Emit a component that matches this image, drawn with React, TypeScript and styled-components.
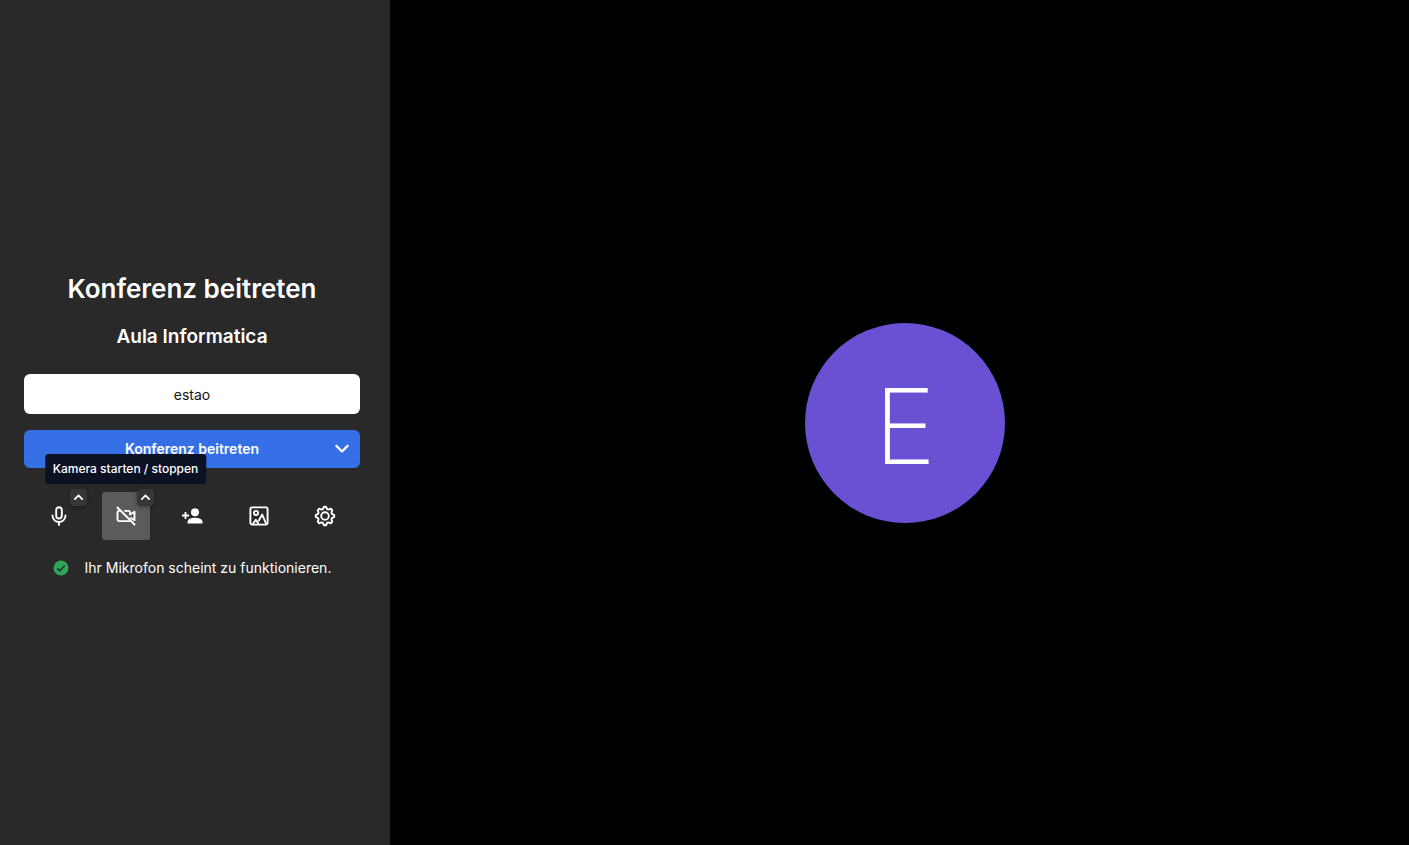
import React from "react";
import styled, { createGlobalStyle } from "styled-components";

const GlobalStyle = createGlobalStyle`
  *, *::before, *::after { box-sizing: border-box; }
  body {
    margin: 0;
    background: #000;
    color: #fff;
    font-family: Inter, "Liberation Sans", sans-serif;
    font-size: 14px;
    line-height: 20px;
  }
  button, input { font: inherit; color: inherit; }
`;

const Page = styled.main`
  display: flex;
  min-height: 100vh;
`;

const Panel = styled.section`
  display: flex;
  flex: 0 0 390px;
  flex-direction: column;
  justify-content: center;
  padding: 6px 30px 0 24px;
  background: #292929;
`;

const Title = styled.h1`
  margin: 0 0 16px;
  font-size: 26px;
  font-weight: 600;
  line-height: 36px;
  text-align: center;
`;

const RoomName = styled.h2`
  margin: 0 0 23px;
  font-size: 19px;
  font-weight: 600;
  line-height: 28px;
  text-align: center;
`;

const Form = styled.form`
  display: flex;
  flex-direction: column;
  gap: 16px;
`;

const NameInput = styled.input`
  width: 100%;
  height: 40px;
  padding: 0 16px;
  border: 0;
  border-radius: 6px;
  background: #fff;
  color: #141414;
  text-align: center;
  outline: none;
`;

const JoinGroup = styled.div`
  display: grid;
  grid-template-columns: 36px 1fr 36px;
  height: 38px;
  border-radius: 6px;
  background: #356fe6;
`;

const JoinButton = styled.button`
  grid-column: 2;
  padding: 0;
  border: 0;
  background: none;
  font-weight: 600;
`;

const JoinOptions = styled.button`
  display: flex;
  align-items: center;
  justify-content: center;
  padding: 0;
  border: 0;
  background: none;
`;

const Toolbar = styled.div`
  display: flex;
  justify-content: space-between;
  margin: 24px 0 16px;
  padding: 0 11px;
`;

const ToolSlot = styled.div`
  position: relative;
  width: 48px;
  height: 48px;
`;

const ToolButton = styled.button<{ $active?: boolean }>`
  display: flex;
  align-items: center;
  justify-content: center;
  width: 100%;
  height: 100%;
  padding: 0;
  border: 0;
  border-radius: 3px;
  background: ${({ $active }) => ($active ? "#5b5b5b" : "transparent")};
`;

const OptionsButton = styled.button`
  position: absolute;
  top: -3px;
  right: -4px;
  display: flex;
  align-items: center;
  justify-content: center;
  width: 17px;
  height: 17px;
  padding: 0;
  border: 0;
  border-radius: 4px;
  background: #363636;
  box-shadow: 0 1px 4px rgba(0, 0, 0, 0.35);
`;

const Tooltip = styled.div`
  position: absolute;
  bottom: calc(100% + 8px);
  left: 50%;
  z-index: 1;
  padding: 5px 8px;
  border-radius: 3px;
  background: #0d1124;
  font-size: 12px;
  font-weight: 500;
  line-height: 20px;
  white-space: nowrap;
  transform: translateX(-50%);
`;

const Status = styled.p`
  display: flex;
  align-items: center;
  justify-content: center;
  gap: 16px;
  margin: 0;
  line-height: 24px;
`;

const Preview = styled.section`
  display: flex;
  flex: 1;
  align-items: center;
  justify-content: center;
  padding-left: 11px;
  background: #000;
`;

const Avatar = styled.div`
  display: flex;
  align-items: center;
  justify-content: center;
  width: 200px;
  height: 200px;
  padding-top: 6px;
  border-radius: 50%;
  background: #6a50d3;
  font-size: 105px;
  font-weight: 150;
  line-height: 120px;
`;

const Chevron = ({ size, up }: { size: number; up?: boolean }) => (
  <svg width={size} height={size} viewBox="0 0 16 16" fill="none" stroke="currentColor" strokeWidth={up ? 2.2 : 1.8} strokeLinecap="round" strokeLinejoin="round" aria-hidden="true">
    <path d={up ? "M3.500 10l4.500-4.500 4.500 4.500" : "M3.500 5.500l4.500 4.500 4.500-4.500"} />
  </svg>
);

const Icon = ({ children }: { children: React.ReactNode }) => (
  <svg width="24" height="24" viewBox="0 0 24 24" fill="none" stroke="currentColor" strokeWidth="1.9" strokeLinecap="round" strokeLinejoin="round" aria-hidden="true">
    {children}
  </svg>
);

const MicIcon = () => (
  <Icon>
    <rect x="9.2" y="3.2" width="5.6" height="11.3" rx="2.8" />
    <path d="M5.500 11.500a6.500 6.500 0 0 0 13 0M12 18v3" />
  </Icon>
);

const CameraOffIcon = () => (
  <Icon>
    <path d="M6.500 6.900H5a1.500 1.500 0 0 0-1.500 1.500v7.200A1.500 1.500 0 0 0 5 17.100h10.500M11 6.900h3.500A1.500 1.500 0 0 1 16 8.400v2.100l4.500-2.800v8.600L17 14" />
    <path d="M3.500 3.500l17 17" />
  </Icon>
);

const InviteIcon = () => (
  <Icon>
    <path d="M5.500 8v7M2 11.500h7" strokeLinecap="butt" strokeWidth="1.800" />
    <circle cx="15" cy="8.300" r="4" fill="currentColor" stroke="none" />
    <path d="M7.500 19.500v-1.500c0-3 4-4.200 7.500-4.200s7.500 1.200 7.500 4.200v1.500z" fill="currentColor" stroke="none" />
  </Icon>
);

const BackgroundIcon = () => (
  <Icon>
    <rect x="3.400" y="3.400" width="17.200" height="17.200" rx="1.500" />
    <circle cx="9" cy="9" r="2.100" />
    <path d="M6.300 19.500l2.500-3.800 2.500 3.800M11.800 16.500l3.400-6 3.800 9" />
  </Icon>
);

const gearOutline = Array.from({ length: 8 }, (_, tooth) =>
  [
    [-17, 7.3],
    [-6, 9.3],
    [6, 9.3],
    [17, 7.3],
  ].map(([offset, radius]) => {
    const angle = ((tooth * 45 + offset) * Math.PI) / 180;
    return `${(12 + radius * Math.sin(angle)).toFixed(2)},${(12 - radius * Math.cos(angle)).toFixed(2)}`;
  }).join(" "),
).join(" ");

const GearIcon = () => (
  <Icon>
    <circle cx="12" cy="12" r="3.800" />
    <polygon points={gearOutline} />
  </Icon>
);

const CheckIcon = () => (
  <svg width="16" height="16" viewBox="0 0 16 16" aria-hidden="true">
    <circle cx="8" cy="8" r="7.500" fill="#31a65a" />
    <path d="M4.300 8.300l2.500 2.500 5-5.300" fill="none" stroke="#173e24" strokeWidth="1.800" />
  </svg>
);

export default function App() {
  return (
    <Page>
      <GlobalStyle />
      <Panel>
        <Title>Konferenz beitreten</Title>
        <RoomName>Aula Informatica</RoomName>
        <Form onSubmit={(event) => event.preventDefault()}>
          <NameInput aria-label="Name" defaultValue="estao" />
          <JoinGroup>
            <JoinButton type="submit">Konferenz beitreten</JoinButton>
            <JoinOptions type="button" aria-label="Weitere Optionen">
              <Chevron size={20} />
            </JoinOptions>
          </JoinGroup>
        </Form>
        <Toolbar role="toolbar">
          <ToolSlot>
            <ToolButton aria-label="Mikrofon"><MicIcon /></ToolButton>
            <OptionsButton aria-label="Audioeinstellungen"><Chevron size={13} up /></OptionsButton>
          </ToolSlot>
          <ToolSlot>
            <ToolButton $active aria-describedby="camera-tip" aria-label="Kamera"><CameraOffIcon /></ToolButton>
            <OptionsButton aria-label="Videoeinstellungen"><Chevron size={13} up /></OptionsButton>
            <Tooltip role="tooltip" id="camera-tip">Kamera starten / stoppen</Tooltip>
          </ToolSlot>
          <ToolSlot>
            <ToolButton aria-label="Personen einladen"><InviteIcon /></ToolButton>
          </ToolSlot>
          <ToolSlot>
            <ToolButton aria-label="Hintergrund"><BackgroundIcon /></ToolButton>
          </ToolSlot>
          <ToolSlot>
            <ToolButton aria-label="Einstellungen"><GearIcon /></ToolButton>
          </ToolSlot>
        </Toolbar>
        <Status role="status">
          <CheckIcon />
          Ihr Mikrofon scheint zu funktionieren.
        </Status>
      </Panel>
      <Preview>
        <Avatar>E</Avatar>
      </Preview>
    </Page>
  );
}
